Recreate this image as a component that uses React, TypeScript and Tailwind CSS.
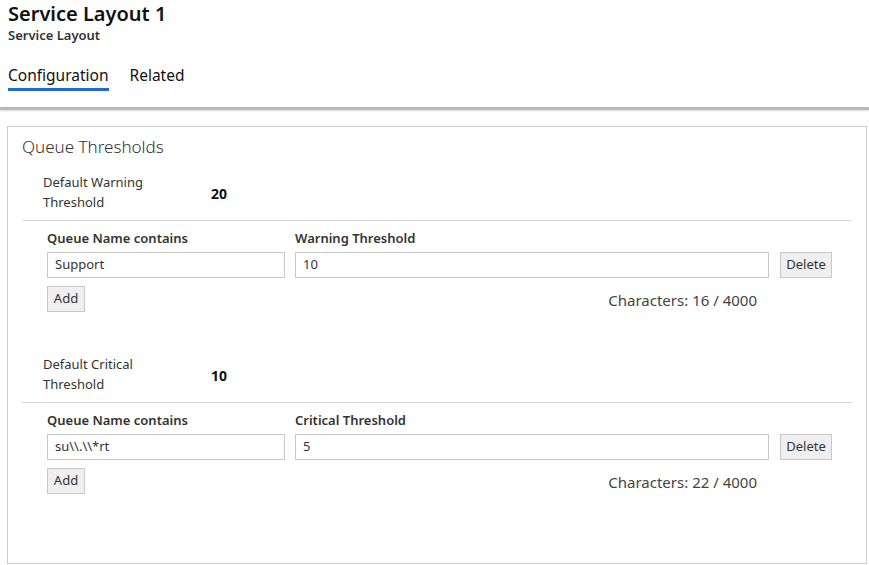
import React from "react";

function Section({ label1, label2, value, colLabel, name, threshold, chars }: { label1: string; label2: string; value: string; colLabel: string; name: string; threshold: string; chars: string }) {
  return (
    <div>
      <div className="flex items-center pl-[21px] h-[40px]">
        <div className="w-[168px] text-[13px] leading-[20px] text-[#333]">
          <div>{label1}</div>
          <div>{label2}</div>
        </div>
        <div className="text-[14px] font-bold text-[#111] pt-[2px]">{value}</div>
      </div>
      <div className="mt-[8px] border-t border-[#d8d8d8]" />
      <div className="pl-[25px] pr-[20px] pt-[8px]">
        <div className="flex text-[13px] leading-[18px] font-semibold text-[#333]">
          <div className="w-[248px]">Queue Name contains</div>
          <div>{colLabel}</div>
        </div>
        <div className="flex mt-[5px] h-[26px]">
          <div className="w-[238px] border border-[#c8c8c8] flex items-center px-[7px] text-[13px] text-[#333]">{name}</div>
          <div className="ml-[10px] flex-1 border border-[#c8c8c8] flex items-center px-[7px] text-[13px] text-[#333]">{threshold}</div>
          <div className="ml-[11px] w-[52px] border border-[#c8c8c8] bg-[#efefef] flex items-center justify-center text-[13px] text-[#333]">Delete</div>
        </div>
        <div className="flex mt-[8px]">
          <div className="w-[38px] h-[26px] border border-[#c8c8c8] bg-[#efefef] flex items-center justify-center text-[13px] text-[#333]">Add</div>
          <div className="flex-1 flex justify-end pr-[75px] pt-[4px] text-[15px] leading-[20px] text-[#444]">{chars}</div>
        </div>
      </div>
    </div>
  );
}

export default function App() {
  return (
    <div className="w-[869px] h-[565px] bg-white overflow-hidden" style={{ fontFamily: '"Noto Sans", "Open Sans", sans-serif' }}>
      <div className="px-2">
        <div className="text-[20px] leading-[26px] font-semibold text-[#111] pt-[1px]">Service Layout 1</div>
        <div className="text-[13px] leading-[16px] font-semibold text-[#333]">Service Layout</div>
        <div className="flex gap-[21px] mt-[22px] text-[15.5px] leading-[20px]">
          <div className="pb-[3px] border-b-[3px] border-[#2266e3] text-[#111]">Configuration</div>
          <div className="text-[#111]">Related</div>
        </div>
      </div>
      <div className="mt-[16px] h-[3px] bg-[#b8b8b8] shadow-[0_1px_2px_rgba(0,0,0,0.15)]" />
      <div className="ml-[7px] mr-[2px] mt-[16px] h-[438px] border border-[#cccccc] px-[14px] pt-[8px]">
        <div className="text-[17px] leading-[24px] text-[#333] font-light">Queue Thresholds</div>
        <div className="mt-[13px]">
          <Section label1="Default Warning" label2="Threshold" value="20" colLabel="Warning Threshold" name="Support" threshold="10" chars="Characters: 16 / 4000" />
        </div>
        <div className="mt-[42px]">
          <Section label1="Default Critical" label2="Threshold" value="10" colLabel="Critical Threshold" name={"su\\\\.\\\\*rt"} threshold="5" chars="Characters: 22 / 4000" />
        </div>
      </div>
    </div>
  );
}
